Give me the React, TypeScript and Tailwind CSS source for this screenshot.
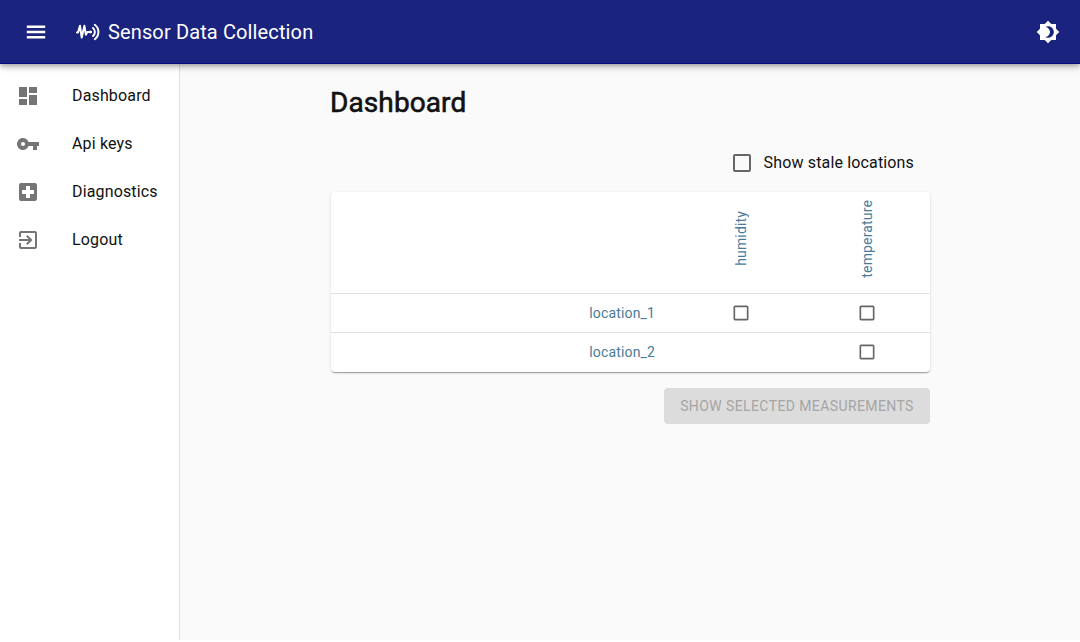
import React from "react";

const icons = {
  menu: "M2.8 18.4h18.4v-2.5H2.8v2.5zm0-5.15h18.4v-2.5H2.8v2.5zm0-7.65v2.5h18.4V5.6H2.8z",
  dashboard: "M3 13h8V3H3v10zm0 8h8v-6H3v6zm10 0h8V11h-8v10zm0-18v6h8V3h-8z",
  key: "M12.65 10C11.83 7.67 9.61 6 7 6c-3.31 0-6 2.69-6 6s2.69 6 6 6c2.61 0 4.83-1.67 5.65-4H17v4h4v-4h2v-4H12.65zM7 14c-1.1 0-2-.9-2-2s.9-2 2-2 2 .9 2 2-.9 2-2 2z",
  hospital:
    "M19 3H5c-1.1 0-1.99.9-1.99 2L3 19c0 1.1.9 2 2 2h14c1.1 0 2-.9 2-2V5c0-1.1-.9-2-2-2zm-1 11h-4v4h-4v-4H6v-4h4V6h4v4h4v4z",
  exit: "M10.09 15.59L11.5 17l5-5-5-5-1.41 1.41L12.67 11H3v2h9.67l-2.58 2.59zM19 3H5c-1.11 0-2 .9-2 2v4h2V5h14v14H5v-4H3v4c0 1.1.89 2 2 2h14c1.1 0 2-.9 2-2V5c0-1.1-.9-2-2-2z",
  brightness:
    "M20 8.69V4h-4.69L12 .69 8.69 4H4v4.69L.69 12 4 15.31V20h4.69L12 23.31 15.31 20H20v-4.69L23.31 12 20 8.69zM12 17.8c-.89 0-1.74-.2-2.5-.55C12 16.5 14 14.42 14 12s-2-4.5-4.5-5.25C10.26 6.4 11.11 6.2 12 6.2c3.2 0 5.8 2.6 5.8 5.8s-2.6 5.8-5.8 5.8z",
  checkbox:
    "M19 5v14H5V5h14m0-2H5c-1.1 0-2 .9-2 2v14c0 1.1.9 2 2 2h14c1.1 0 2-.9 2-2V5c0-1.1-.9-2-2-2z",
};

function Icon({ path, className = "size-6" }: { path: string; className?: string }) {
  return (
    <svg viewBox="0 0 24 24" fill="currentColor" className={className} aria-hidden="true">
      <path d={path} />
    </svg>
  );
}

function Logo() {
  return (
    <svg viewBox="0 0 24 24" fill="none" stroke="currentColor" strokeWidth="2" strokeLinecap="round" strokeLinejoin="round" className="size-6" aria-hidden="true">
      <path d="M1 12.4H2L4 5.8l1.7 11.7L8.4 5.8l1.5 8.9 1.5-2.6h3" />
      <circle cx="14.4" cy="12" r="1.1" fill="currentColor" strokeWidth="1" />
      <path d="M17 8a5.2 5.2 0 0 1 0 8M18.8 4.8a9 9 0 0 1 0 14.4" />
    </svg>
  );
}

function Checkbox({ className, label }: { className: string; label: string }) {
  return (
    <button role="checkbox" aria-checked="false" aria-label={label} className="flex text-[#666666]">
      <Icon path={icons.checkbox} className={className} />
    </button>
  );
}

const navigation = [
  { label: "Dashboard", path: icons.dashboard },
  { label: "Api keys", path: icons.key },
  { label: "Diagnostics", path: icons.hospital },
  { label: "Logout", path: icons.exit },
];

const locations = [
  { name: "location_1", humidity: true, temperature: true },
  { name: "location_2", humidity: false, temperature: true },
];

export default function App() {
  return (
    <div className="flex h-[642px] w-full flex-col overflow-hidden bg-white font-[Roboto,sans-serif] text-[#111111]">
      <header className="relative z-10 flex h-16 shrink-0 items-center border-b border-[#060a80] bg-[#1a237e] pr-5 pl-6 text-white shadow-[0_2px_4px_-1px_rgba(0,0,0,0.2),0_4px_5px_0_rgba(0,0,0,0.14),0_1px_10px_0_rgba(0,0,0,0.12)]">
        <button aria-label="Menu" className="mr-7">
          <Icon path={icons.menu} />
        </button>
        <Logo />
        <span className="ml-2 text-[20px] leading-8 tracking-[0.13px]">Sensor Data Collection</span>
        <button aria-label="Toggle theme" className="ml-auto">
          <Icon path={icons.brightness} />
        </button>
      </header>
      <div className="flex h-[576px] shrink-0">
        <nav className="w-[180px] shrink-0 border-r border-[#e0e0e0] bg-white pt-2">
          {navigation.map((item) => (
            <a key={item.label} className="flex h-12 items-center pl-4">
              <Icon path={item.path} className="size-6 text-[#757575]" />
              <span className="ml-8 text-base tracking-[0.15px]">{item.label}</span>
            </a>
          ))}
        </nav>
        <main className="flex flex-1 justify-center bg-[#fafafa] pl-px">
          <div className="flex w-[599px] flex-col pt-[23px]">
            <h1 className="-ml-px text-[28px] leading-8 tracking-[0.1px] [-webkit-text-stroke:0.6px_#111111]">Dashboard</h1>
            <div className="mt-8 flex h-6 items-center self-end pr-4">
              <Checkbox label="Show stale locations" className="size-6" />
              <span className="ml-[9.5px] text-base tracking-[0.15px]">Show stale locations</span>
            </div>
            <table className="mt-[17px] w-full table-fixed border-separate border-spacing-0 rounded bg-white text-sm tracking-[0.15px] text-[#4b7b99] shadow-[0_2px_1px_-1px_rgba(0,0,0,0.2),0_1px_1px_0_rgba(0,0,0,0.14),0_1px_3px_0_rgba(0,0,0,0.12)]">
              <colgroup>
                <col className="w-[340px]" />
                <col className="w-[142px]" />
                <col className="w-[117px]" />
              </colgroup>
              <thead>
                <tr className="h-[102px]">
                  <th className="border-b border-[#e0e0e0]" />
                  {["humidity", "temperature"].map((name) => (
                    <th key={name} className="border-b border-[#e0e0e0] p-0 font-normal">
                      <div className={`flex h-[101px] items-center pb-2 ${name === "humidity" ? "pl-[60px]" : "pl-[44px]"}`}>
                        <span className="rotate-180 leading-5 [writing-mode:vertical-rl]">{name}</span>
                      </div>
                    </th>
                  ))}
                </tr>
              </thead>
              <tbody className="[&>tr:last-child>td]:border-b-0 [&>tr:last-child>td]:pb-0.5">
                {locations.map((row) => (
                  <tr key={row.name} className="h-[39px]">
                    <td className="border-b border-[#e0e0e0] p-0 pr-4 text-right">{row.name}</td>
                    <td className="border-b border-[#e0e0e0] p-0 pl-[60px]">
                      {row.humidity && <Checkbox label={`${row.name} humidity`} className="size-5" />}
                    </td>
                    <td className="border-b border-[#e0e0e0] p-0 pl-[44px]">
                      {row.temperature && <Checkbox label={`${row.name} temperature`} className="size-5" />}
                    </td>
                  </tr>
                ))}
              </tbody>
            </table>
            <button disabled className="mt-4 h-9 w-[266px] self-end rounded bg-[#dcdcdc] text-sm tracking-[0.4px] text-[#a5a5a5] uppercase">
              Show selected measurements
            </button>
          </div>
        </main>
      </div>
    </div>
  );
}
